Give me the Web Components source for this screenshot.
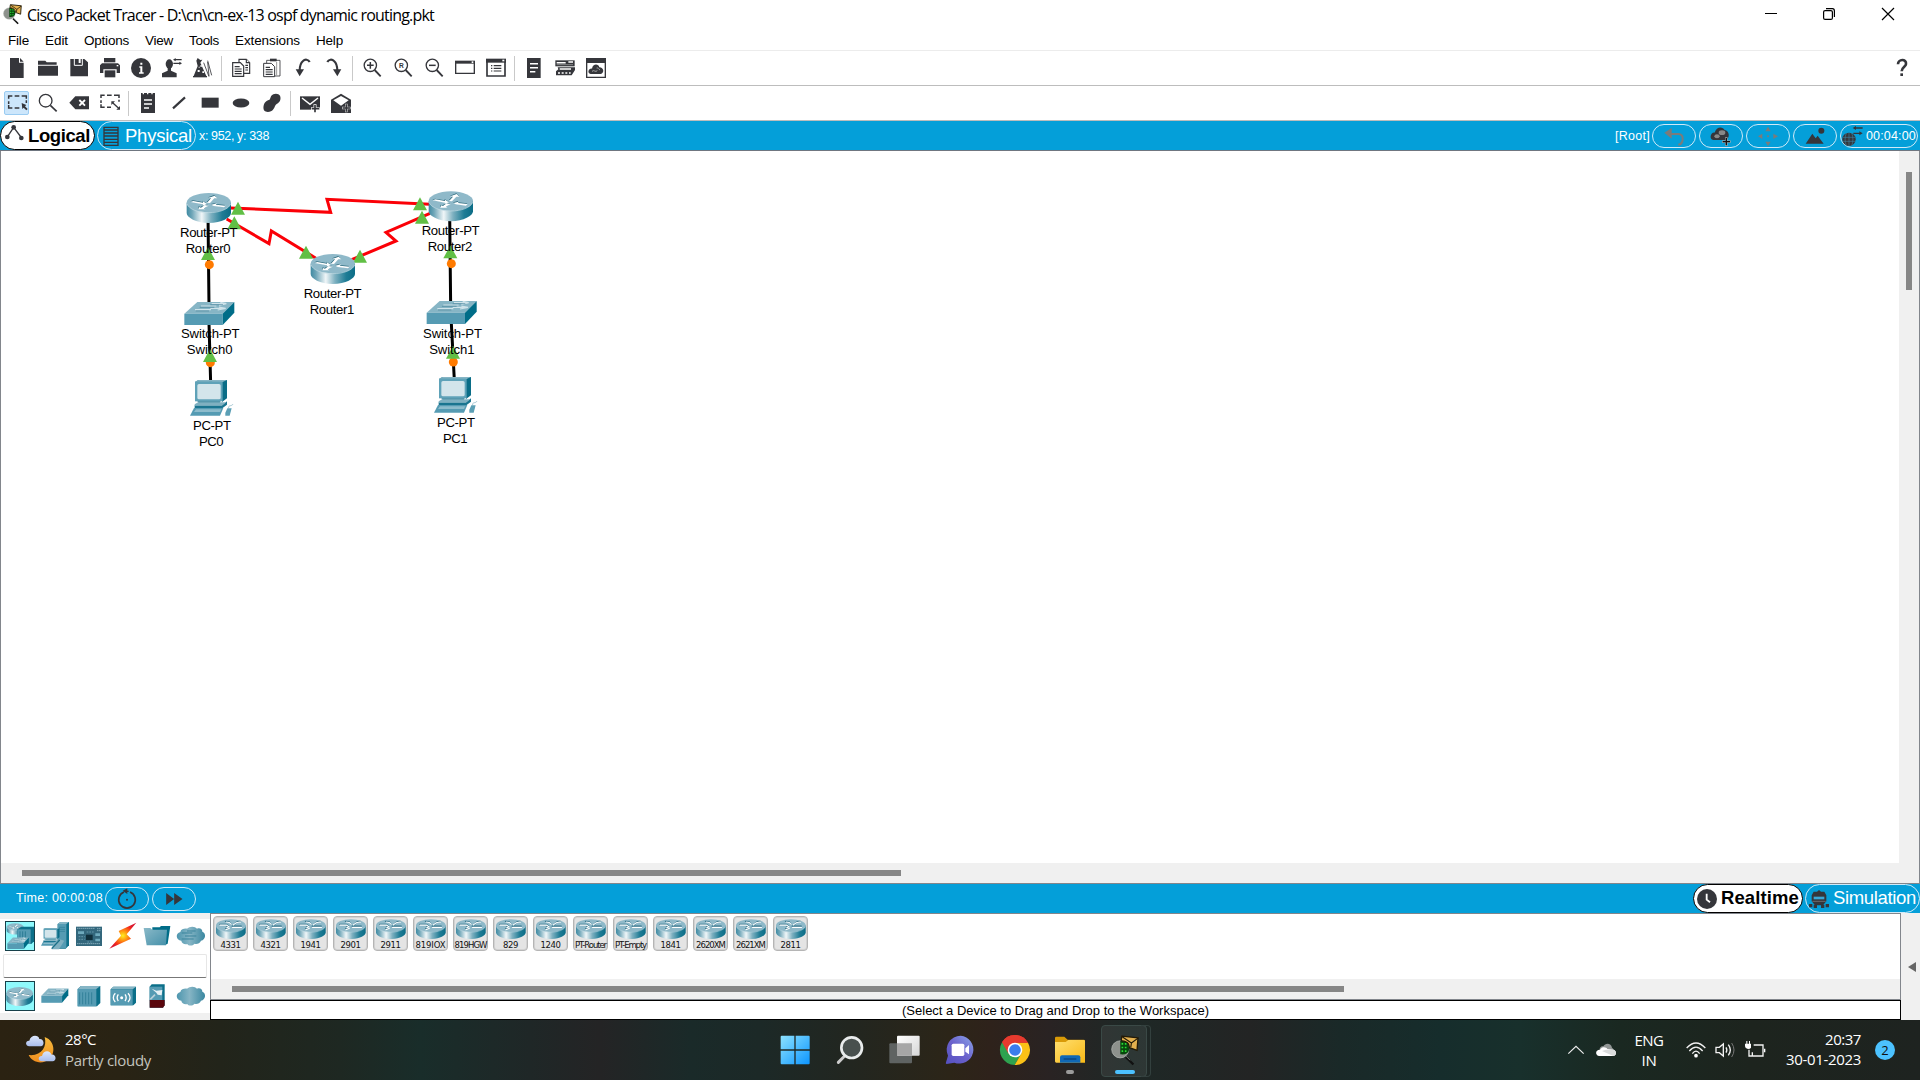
<!DOCTYPE html>
<html lang="en">
<head>
<meta charset="utf-8">
<title>Cisco Packet Tracer</title>
<style>
html,body{margin:0;padding:0;width:1920px;height:1080px;overflow:hidden;background:#fff}
body{display:flex;flex-direction:column;font-family:"Liberation Sans",Arial,sans-serif;font-size:13px;color:#000}
</style>
</head>
<body>
<pt-titlebar></pt-titlebar>
<pt-menubar></pt-menubar>
<pt-toolbar items="new open save print info user wizard | copy paste undo redo | zoomin zoomreset zoomout window list | notes devices cluster" help></pt-toolbar>
<pt-toolbar items="*select inspect delete resize | note line rect ellipse freeform | mail openmail"></pt-toolbar>
<pt-topbar></pt-topbar>
<net-workspace></net-workspace>
<pt-timebar></pt-timebar>
<pt-devicedock></pt-devicedock>
<win-taskbar></win-taskbar>
<script>
const K = '#35363b';
const grad = `<defs>
<linearGradient id="side"><stop offset="0" stop-color="#3f8aa2"/><stop offset=".12" stop-color="#6fa6b8"/><stop offset=".34" stop-color="#f0f6f8"/><stop offset=".55" stop-color="#7db0c0"/><stop offset=".8" stop-color="#1f7c95"/><stop offset="1" stop-color="#0b6c86"/></linearGradient>
<linearGradient id="cl"><stop offset="0" stop-color="#4d96ae"/><stop offset=".45" stop-color="#86b5c5"/><stop offset="1" stop-color="#3a87a0"/></linearGradient>
<linearGradient id="fo" x2="1" y2="1"><stop offset="0" stop-color="#8ab9c8"/><stop offset="1" stop-color="#4590a9"/></linearGradient>
</defs>`;
const routerArrows = `<path d="M12 28 48 35 48 39 61 34 49 26 49 30 20 25zM81 40 112 44 117 39 88 36 90 32 74 36zM61 30 73 17 65 16 84 9 92 17 83 17 70 31zM66 39 56 44 52 48 57 50 35 50 37 43 43 45 54 37z" fill="#0c5064" opacity=".75" transform="translate(-1 -2)"/>
<path d="M12 28 48 35 48 39 61 34 49 26 49 30 20 25zM81 40 112 44 117 39 88 36 90 32 74 36zM61 30 73 17 65 16 84 9 92 17 83 17 70 31zM66 39 56 44 52 48 57 50 35 50 37 43 43 45 54 37z" fill="#fff"/>`;
/* Flatter arrow set used on the palette buttons. */
const paletteArrows = `<g fill="none" stroke-linecap="round" stroke-linejoin="round"><g stroke="#2f7188" stroke-width="6" transform="translate(-1 -3)"><path d="M18 28H48L58 35 48 40M74 36H114M84 28C90 16 100 12 110 14M68 26 60 16 44 14M56 44 44 48"/></g><g stroke="#fff" stroke-width="5"><path d="M18 28H48L58 35 48 40M74 38H114M78 27C88 16 100 12 110 14M68 24 60 16 46 14M60 42 44 49"/></g></g>`;
const router = (x, y, s = 1, t = s, a = routerArrows) => `<g transform="translate(${x} ${y}) scale(${s} ${t})"><path d="M0 30V61C0 74 28 91 66.500 91S133 74 133 61V30z" fill="url(#side)"/><ellipse cx="66.500" cy="30" rx="66.500" ry="29" fill="#8fb9c9"/><path d="M1 34C8 50 34 60 66 60S126 50 132 34" fill="none" stroke="#c2dbe4" stroke-width="2"/>${a}</g>`;
const sw = (x, y, s = 1, t = s) => `<g transform="translate(${x} ${y}) scale(${s} ${t})"><path d="M0 36 39 1H150L115 36z" fill="#86b5c5"/><path d="M0 36H115V70H0z" fill="#559bb3"/><path d="M115 36 150 1V33L115 70z" fill="#006d88"/><path d="M82 6h42M108 2l18 4-22 5M50 13H96M78 20h44M104 16l20 4-24 5M32 24h48" stroke="#cfe3ea" stroke-width="3.500" fill="none"/><path d="M78 9h38M46 17h44M34 28h40" stroke="#48839a" stroke-width="2"/></g>`;
const pc = (x, y, s = 1, t = s) => `<g transform="translate(${x} ${y}) scale(${s} ${t})"><path d="M15 5 26 0H111V55L96 66V5z" fill="#0a6d87"/><path d="M15 5 26 0H111L98 6z" fill="#86b5c5"/><path d="M15 5H98V64H15z" fill="#5fa2b8"/><rect x="22" y="12" width="70" height="46" rx="5" fill="#d3e5eb"/><path d="M22 64H92L86 74H30z" fill="#2f7f98"/><path d="M14 76H96L111 64V74L98 84H14z" fill="#1a7590"/><path d="M14 73 24 67H108L96 77H14z" fill="#7fb0c1"/><path d="M12 84H100L90 107H0z" fill="#559bb3"/><path d="M18 88H94L90 96H12z" fill="#8dbccc"/><path d="M106 98 112 85 125 85 119 107H106z" fill="#5b9fb5"/><path d="M116 84C114 74 126 80 129 72" fill="none" stroke="#a9c8d3" stroke-width="3"/></g>`;
const lens = `<circle cx="25" cy="22" r="18.500" fill="none" stroke="${K}" stroke-width="4"/><path d="M38 36 56 55" stroke="${K}" stroke-width="5.500"/>`;
const cloudShape = 'M13 43C-4 42-5 20 10 17C12 8 22 6 30 7C38-1 54-1 60 7C70 4 76 9 76 16C88 20 87 40 72 43C68 53 58 54 53 52C46 60 34 59 31 53C22 55 14 51 13 43z';
/* name: [width px, height px, viewBox, markup] */
const I = {
 'new':`<path d="M9 0H36V14H50V60H9z"/><path d="M39 0 50 11H39z"/>`,
 open:`<path d="M0 8H22L26 13H56V20H0zM0 23H60V53H0z"/>`,
 save:`<path d="M4 3H46L57 13V55H4z"/><path d="M16 2V22H40V2" fill="none" stroke="#fff" stroke-width="3"/><path d="M29 3h6v12h-6z" fill="#fff"/>`,
 print:`<path d="M12 0H46V13H12z"/><path d="M6 16H54L60 22V45H50V34H10V45H0V22z"/><path d="M14 37H46V58H14z"/><path d="M50 21h5v4h-5z" fill="#fff"/>`,
 info:`<circle cx="30" cy="30" r="30"/><path d="M28 14h6v6h-6zM25 25h9v18h4v4H24v-4h4V29h-3z" fill="#fff"/>`,
 user:`<ellipse cx="22" cy="18" rx="11" ry="14"/><path d="M17 28H27V38L44 46V58H0V46L17 38z"/><path d="M38 5H59M34 16H55" stroke="${K}" stroke-width="3.500"/><path d="M33 5 41 0V10zM60 16 52 11V21z"/>`,
 wizard:`<path d="M14 0 22 6 28 5 22 14 40 54H2L14 24 10 8z"/><path d="M0 54h42v4H0z"/><path d="M22 22h5v4h-5zM14 36h6v6h-6zM28 40h5v5h-5zM17 26h3v3h-3z" fill="#fff"/><path d="M32 14 48 56M44 8 56 52M48 54 44 12" stroke="${K}" stroke-width="2.500"/>`,
 copy:`<g fill="#fff" stroke="${K}" stroke-width="3.500"><path d="M24 4H46L56 14V46H24z"/><path d="M46 4V14H56"/><path d="M5 14H28L38 24V55H5z"/></g><path d="M11 26H26M11 33H32M11 40H32M11 47H32M43 22H51M43 29H51M43 36H51" stroke="${K}" stroke-width="3.500"/>`,
 paste:`<g fill="#fff" stroke="${K}" stroke-width="2.500"><path d="M14 7H54V54H14z"/></g><path d="M24 2H44V10H24z"/><g fill="#fff" stroke="${K}" stroke-width="3"><path d="M5 16H28L38 26V56H5z"/></g><path d="M11 28H24M11 35H32M11 42H32M11 49H32" stroke="${K}" stroke-width="3.500"/><path d="M44 12V52" stroke="#999" stroke-width="3"/>`,
 undo:`<path d="M50 12C46 4 36 3 30 9C22 16 20 26 20 38" fill="none" stroke="${K}" stroke-width="6.500"/><path d="M8 34H33L20 55z"/>`,
 redo:`<path d="M10 12C14 4 24 3 30 9C38 16 40 26 40 38" fill="none" stroke="${K}" stroke-width="6.500"/><path d="M27 34H52L40 55z"/>`,
 zoomin:lens+`<path d="M15 22H35M25 12V32" stroke="${K}" stroke-width="4.500"/>`,
 zoomreset:lens+`<text x="25" y="29.500" font-size="20" font-weight="bold" text-anchor="middle" font-family="Liberation Sans">R</text>`,
 zoomout:lens+`<path d="M15 22H35" stroke="${K}" stroke-width="4.500"/>`,
 window:`<path d="M2 11H58V46H2z" fill="none" stroke="${K}" stroke-width="4"/><path d="M0 8H60V17H0z"/><path d="M50 10h5v5h-5z" fill="#fff"/>`,
 list:`<path d="M3 6H57V54H3z" fill="#fff" stroke="${K}" stroke-width="5"/><path d="M0 2H60V14H0z"/><path d="M49 5h6v5h-6z" fill="#fff"/><path d="M15 23h4M15 31h4M15 39h4M23 23H46M23 31H46M23 39H46" stroke="${K}" stroke-width="3.500"/>`,
 notes:`<path d="M9 0H50V60H9z"/><path d="M18 17H42M18 29H42M18 41H34" stroke="#fff" stroke-width="4.500"/>`,
 devices:`<path d="M1 7H59V25H1z"/><path d="M5 14H32M40 12H54" stroke="#fff" stroke-width="4.500"/><path d="M5 20H54" stroke="#aaa" stroke-width="2"/><path d="M8 28H60V36L50 52H3V40L10 34z"/><path d="M9 45h6M20 45h6M31 45h6M42 45h5M14 33H48" stroke="#fff" stroke-width="4"/>`,
 cluster:`<path d="M2 2H58V58H2z" fill="#fff" stroke="${K}" stroke-width="4"/><path d="M0 0H60V15H0z"/><path d="M14 48C2 46 8 30 18 32C20 16 38 16 40 28C54 28 56 46 44 48z"/><path d="M18 40C24 34 28 44 34 38M32 30C36 28 38 34 42 36" fill="none" stroke="#aaa" stroke-width="3"/>`,
 select:`<path d="M5 17V9H16M23 9H37M44 9H58V17M5 25V33M5 36V45H16M23 45H37M58 22V30" fill="none" stroke="${K}" stroke-width="4.500"/><path d="M44 30 58 36 54 40 62 48 58 52 50 44 46 48z"/>`,
 resize:`<path d="M3 15V7H14M21 7H35M42 7H57V15M3 22V30M3 34V43H14M21 43H33M57 20V26" fill="none" stroke="${K}" stroke-width="4.500"/><path d="M34 25H45L34 36zM60 50H49L60 39z"/><path d="M38 29 56 46" stroke="${K}" stroke-width="4"/>`,
 inspect:`<circle cx="23" cy="23" r="19" fill="none" stroke="${K}" stroke-width="4"/><path d="M37 37 56 55" stroke="${K}" stroke-width="5"/>`,
 'delete':`<path d="M1 29 19 10H60V49H19z"/><path d="M31 21 48 38M48 21 31 38" stroke="#fff" stroke-width="5.500"/>`,
 note:`<path d="M9 0H51V60H9z"/><path d="M14-1v5h4v-5zM27-1v5h4v-5zM40-1v5h4v-5z" fill="#fff"/><path d="M18 21H42M18 33H42M18 45H33" stroke="#fff" stroke-width="4.500"/>`,
 line:`<path d="M12 46 48 13" stroke="${K}" stroke-width="6.500"/>`,
 rect:`<path d="M5 14H56V44H5z"/>`,
 ellipse:`<ellipse cx="30" cy="30" rx="25" ry="13.500"/>`,
 freeform:`<path d="M28 8C34 0 50 0 54 8C58 17 54 28 45 32C39 35 39 42 34 49C28 58 12 60 6 52C2 42 6 26 18 22C26 20 24 14 28 8z"/>`,
 mail:`<path d="M0 10H60V50H0z"/><path d="M6 15 30 34 54 15" fill="none" stroke="#fff" stroke-width="4.500"/><path d="M45 34V60M33 47H59" stroke="#fff" stroke-width="9"/><path d="M45 36V58M35 47H57" stroke="${K}" stroke-width="5"/>`,
 openmail:`<path d="M0 20 30 2 60 20V60H0z"/><path d="M7 22 30 9 53 22 30 38z" fill="#fff"/><path d="M46 32V58M33 45H59" stroke="#ccc" stroke-width="8"/><path d="M46 34V56M35 45H57" stroke="${K}" stroke-width="4.500"/>`,
 help:`<path d="M18 19C18 2 44 2 42 18C42 26 29 27 29 40" fill="none" stroke="${K}" stroke-width="8"/><path d="M25 46h8v8h-8z"/>`,
 nodes:[20,18,'0 0 60 54',`<path d="M6 40 26 10 50 42" fill="none" stroke="${K}" stroke-width="4"/><circle cx="7" cy="39" r="7"/><circle cx="26" cy="10" r="7"/><circle cx="49" cy="42" r="7"/>`],
 rack:[16,20,'0 0 48 60',`<path d="M3 4H45V58H3z" fill="none" stroke="${K}" stroke-width="4"/><path d="M3 12H45M3 21H45M3 30H45M3 40H45M3 49H45" stroke="${K}" stroke-width="4"/>`],
 back:[22,20,'0 0 66 60',`<path d="M4 20 26 6V38z" fill="#7b7b7b"/><path d="M22 24H48C64 26 62 54 46 56" fill="none" stroke="#7b7b7b" stroke-width="6"/>`],
 newcluster:[22,20,'0 0 66 60',`<path d="M10 42C-4 40 2 18 14 20C18 2 38 0 44 12C58 14 62 36 46 42z"/><ellipse cx="21" cy="31" rx="8" ry="6" fill="#888"/><ellipse cx="36" cy="20" rx="10" ry="7" fill="#888"/><path d="M49 34V60M36 47H62" stroke="#aaa" stroke-width="7"/><path d="M49 36V58M38 47H60" stroke="#111" stroke-width="4"/>`],
 move:[20,20,'0 0 60 60',`<g fill="#7b7b7b"><path d="M30 2 38 16H22zM30 60 22 47H38zM0 31 13 23V39zM60 31 46 23V39z"/><circle cx="30" cy="31" r="3"/></g>`],
 bgimg:[20,17,'0 0 60 51',`<path d="M2 50 22 20 32 34 38 26 56 50z"/><circle cx="49" cy="11" r="9"/>`],
 env:[22,20,'0 0 66 60',`<circle cx="21" cy="40" r="20"/><path d="M2 34H40M2 46H40M21 20V60M13 21C8 34 8 46 13 59M29 21C34 34 34 46 29 59" fill="none" stroke="#3f7f9c" stroke-width="2"/><path d="M38 6H62M34 22H54" stroke="${K}" stroke-width="4"/><path d="M32 6 42 0V12zM62 22 52 16V28z"/>`],
 cycle:[22,22,'0 0 66 66',`<path d="M24 12A25 25 0 1 0 42 12" fill="none" stroke="${K}" stroke-width="5"/><path d="M20 8 34 1V18z"/><path d="M28 8H38V12H28z"/><circle cx="33" cy="35" r="3"/>`],
 ffwd:[17,12,'0 0 50 36',`<path d="M0 0 24 18 0 36zM24 0 49 18 24 36z"/>`],
 clock:[20,20,'0 0 60 60',`<circle cx="30" cy="30" r="30"/><path d="M29 14V32L39 40" fill="none" stroke="#fff" stroke-width="5.500"/>`],
 sim:[20,18,'0 0 60 54',`<path d="M30 0 36 5H46L52 16V34L42 46H18L8 34V16L14 5H24z"/><path d="M14 20H46V28H14z" fill="#3aa7d6"/><path d="M10 34H50" stroke="#888" stroke-width="2"/><path d="M0 42H10V52H0zM14 44H24V54H14zM36 44H46V54H36zM50 42H60V52H50z"/>`],
 min:[12,12,'0 0 12 12',`<path d="M0 5.500H12" stroke="#000"/>`],
 restore:[12,12,'0 0 12 12',`<g fill="none" stroke="#000" stroke-width="1.200"><rect x=".6" y="2.600" width="8.800" height="8.800" rx="1.500"/><path d="M3 .6H9.500Q11.400.6 11.400 3V9"/></g>`],
 close:[12,12,'0 0 12 12',`<path d="M0 0 12 12M12 0 0 12" stroke="#000" stroke-width="1.200"/>`],
 app:[28,30,'0 0 85 90',`<circle cx="28" cy="43" r="26" fill="#8d918c" stroke="#b9bdb8" stroke-width="2"/><path d="M28 18C46 14 56 28 55 44C53 54 44 60 28 58z" fill="#07480c"/><path d="M32 24h5v5h-5zM42 24h5v5h-5zM32 35h5v5h-5zM42 35h5v5h-5zM32 46h5v5h-5zM42 46h5v5h-5z" fill="#2bdc35"/><path d="M33 3 82 8 79 46 56 38C56 26 48 18 31 17z" fill="#e3b04e" stroke="#221a08" stroke-width="4"/><path d="M34 5 62 24 82 9M62 24 60 36" fill="none" stroke="#221a08" stroke-width="3.500"/><path d="M45 66 68 89" stroke="#111" stroke-width="7"/><path d="M45 63 58 76" stroke="#6b706b" stroke-width="3"/>`],
 c_net:[28,28,'0 0 84 84',router(2,3,.38,.38)+`<path d="M34 22 46 14H84V58L76 66H34z" fill="#0b6f89"/><path d="M34 22H74V66H34z" fill="#559bb3"/><path d="M42 28V60M50 28V60M58 28V60" stroke="#2c7c95" stroke-width="3"/>`+sw(4,46,.43,.5)],
 c_end:[28,28,'0 0 84 84',`<path d="M50 6 58 0H84V70L74 80H50z" fill="#0f718b"/><path d="M50 6 58 0H84L76 6z" fill="#86b5c5"/><path d="M50 6H76V78H50z" fill="#559bb3"/><path d="M54 16H72M54 22H72M54 28H72" stroke="#2c7c95" stroke-width="2"/>`+pc(0,18,.5,.5)+`<path d="M38 62 56 52 70 56 54 82H32z" fill="#7fb0c1"/><path d="M32 80 56 54" stroke="#1a6f88" stroke-width="4"/>`],
 c_comp:[26,20,'0 0 78 60',`<path d="M0 2H78V60H0z" fill="#33677c"/><path d="M4 7H56M4 53H72M64 8H74M64 14H74" stroke="#a9cad6" stroke-width="3" stroke-dasharray="3 3"/><path d="M30 26H50V42H30z" fill="#102f3b"/><path d="M6 16H24V24H6zM58 22H72V30H58zM58 38H72V46H58z" fill="#6faabd"/><path d="M8 32H26M8 40H26M32 18H54M34 48H52" stroke="#7fb0c1" stroke-width="2" stroke-dasharray="5 3"/>`],
 c_bolt:[28,28,'0 0 84 84',`<defs><radialGradient id="b"><stop offset="0" stop-color="#ffef20"/><stop offset=".35" stop-color="#ff9a10"/><stop offset=".8" stop-color="#f4281c"/><stop offset="1" stop-color="#d81830"/></radialGradient></defs><path d="M82 2 29 27 36 41 1 80 66 50 53 37z" fill="url(#b)"/>`],
 c_folder:[28,22,'0 0 84 66',`<path d="M28 7H50L54 3H82L74 56 66 60H28z" fill="#006d88"/><path d="M2 9H22L28 14H72L69 61H11z" fill="url(#fo)"/>`],
 c_cloud:[28,20,'0 0 84 58',`<path d="${cloudShape}" fill="url(#cl)"/><path d="M14 20H46M24 29H58M14 38H50M30 14H56" stroke="#3b849c" stroke-width="3"/>`],
 c_cloud2:[28,20,'0 0 84 58',`<path d="${cloudShape}" fill="url(#cl)"/>`],
 c_router:[28,22,'0 0 84 66',router(1,5,.6,.64)],
 c_switch:[28,18,'0 0 84 54',sw(1,4,.54,.62)],
 c_hub:[24,22,'0 0 72 66',`<path d="M2 12 12 3H70V54L60 64H2z" fill="#0b6f89"/><path d="M2 12 12 3H70L58 12z" fill="#86b5c5"/><path d="M2 12H58V64H2z" fill="#559bb3"/><path d="M8 22V58M17 22V58M26 22V58M35 22V58M44 22V58" stroke="#2c7c95" stroke-width="2.500"/>`],
 c_wifi:[26,20,'0 0 78 60',`<path d="M2 10 10 2H78V50L70 58H2z" fill="#0b6f89"/><path d="M2 10 10 2H78L68 10z" fill="#86b5c5"/><path d="M2 10H68V58H2z" fill="#559bb3"/><g fill="none" stroke="#fff" stroke-width="4"><path d="M25 25C20 32 20 38 25 45M16 22C8 30 8 40 16 48M45 25C50 32 50 38 45 45M54 22C62 30 62 40 54 48"/></g><circle cx="35" cy="35" r="4.500" fill="#fff"/>`],
 c_fw:[16,24,'0 0 48 72',`<path d="M2 8 8 1H47V62L42 71H2z" fill="#0b6f89"/><path d="M2 8H40V50H2z" fill="#559bb3"/><path d="M2 48H47V64L42 71H2z" fill="#5a060c"/><path d="M8 14 22 20 40 18 38 34 26 32 22 26z" fill="#e6f1f5"/><path d="M4 46 18 32" stroke="#b9d0d8" stroke-width="5"/>`],
 winlogo:[30,30,'0 0 90 90',`<defs><linearGradient id="w" x2="1" y2="1" gradientUnits="userSpaceOnUse" gradientTransform="scale(90)"><stop offset="0" stop-color="#90e4ff"/><stop offset="1" stop-color="#0a94ff"/></linearGradient></defs><path d="M2 5Q2 2 5 2H43V43H2zM47 2H86Q89 2 89 5V43H47zM2 47H43V88H5Q2 88 2 85zM47 47H89V85Q89 88 86 88H47z" fill="url(#w)"/>`],
 tsearch:[30,30,'0 0 90 90',`<path d="M10 82 26 66" stroke="#ccc" stroke-width="9" stroke-linecap="round"/><circle cx="50" cy="38" r="31" fill="#48504e" stroke="#e9ecec" stroke-width="8"/>`],
 taskview:[32,30,'0 0 96 90',`<defs><linearGradient id="t" x2="1" y2="1"><stop offset="0" stop-color="#fff"/><stop offset="1" stop-color="#d6d6d6"/></linearGradient></defs><rect x="1" y="25" width="68" height="60" rx="3" fill="#5f6362"/><rect x="24" y="2" width="68" height="60" rx="3" fill="url(#t)"/><path d="M24 25H69V62H27Q24 62 24 59z" fill="#a6a6a6"/>`],
 chat:[30,30,'0 0 90 90',`<defs><linearGradient id="h" x1="1" x2="0" y2="1"><stop offset="0" stop-color="#8aa6ea"/><stop offset=".5" stop-color="#6b62cc"/><stop offset="1" stop-color="#5450c0"/></linearGradient></defs><path d="M47 2A42 42 0 1 1 28 83L5 87Q1 87 3 82L9 62A42 42 0 0 1 47 2z" fill="url(#h)"/><rect x="20" y="26" width="38" height="37" rx="5" fill="#fff"/><path d="M61 40 72 30V58L61 50z" fill="#fff"/>`],
 chrome:[30,30,'0 0 90 90',`<path d="M6 22A45 45 0 0 1 84 23H45z" fill="#e63a2e"/><path d="M6 22A45 45 0 0 0 44 90L64 56 45 45z" fill="#2ea24f"/><path d="M84 23A45 45 0 0 1 44 90L66 52 60 30 45 23z" fill="#fbc116"/><path d="M6 22A45 45 0 0 1 84 23H45L30 40 26 57z" fill="#e63a2e"/><circle cx="45" cy="45" r="22" fill="#fff"/><circle cx="45" cy="45" r="17.500" fill="#3b7ded"/>`],
 explorer:[30,28,'0 0 90 84',`<defs><linearGradient id="e" x2="1" y2="1"><stop offset="0" stop-color="#ffdf70"/><stop offset="1" stop-color="#f9b916"/></linearGradient></defs><path d="M0 6Q0 2 4 2H28L38 11H86Q90 11 90 15V40H0z" fill="#d99a07"/><path d="M0 18H32L40 12H86Q90 12 90 16V80H4Q0 80 0 76z" fill="url(#e)"/><path d="M15 80V64Q15 58 21 58H70Q76 58 76 64V80z" fill="#1068b5"/><path d="M26 69H64" stroke="#08437e" stroke-width="4"/>`],
 weather:[30,28,'0 0 90 84',`<defs><linearGradient id="m" x2="0" y2="1"><stop offset="0" stop-color="#f6bb3e"/><stop offset="1" stop-color="#ef8d1e"/></linearGradient><linearGradient id="u" x2="0" y2="1"><stop offset="0" stop-color="#dce7fb"/><stop offset="1" stop-color="#a9bdec"/></linearGradient></defs><path d="M56 6C92 18 92 72 50 82C30 84 14 74 8 60C46 64 64 36 56 6z" fill="url(#m)"/><path d="M10 34C-4 32-2 16 10 17C14-2 38-1 40 12C54 10 58 32 44 34z" fill="url(#u)"/><path d="M48 79C34 78 36 62 48 63C52 44 74 46 76 59C90 56 94 78 80 79z" fill="url(#u)"/>`],
 chevron:[18,12,'0 0 54 36',`<path d="M4 29 27 7 50 29" fill="none" stroke="#eee" stroke-width="3.500"/>`],
 onedrive:[20,14,'0 0 60 42',`<path d="M12 24C8 12 18 8 22 10C28-2 46 0 48 14L58 24z" fill="#929796"/><path d="M10 39C-4 37-2 19 12 20C20 8 32 14 34 18L52 20C62 22 64 36 52 39z" fill="#fff"/><path d="M30 20 50 20C64 22 62 38 52 39L18 24z" fill="#dadcdc"/>`],
 wifi:[20,16,'0 0 60 48',`<g fill="none" stroke="#f2f2f2" stroke-width="4"><path d="M2 18Q30-12 58 18M10 27Q30 4 50 27M19 35Q30 20 41 35"/></g><circle cx="30" cy="41" r="5.500" fill="#fff"/>`],
 sound:[21,18,'0 0 63 54',`<path d="M3 19H13L25 9V45L13 35H3z" fill="none" stroke="#f2f2f2" stroke-width="4"/><path d="M33 19Q38 27 33 35M40 11Q52 27 40 43" fill="none" stroke="#f2f2f2" stroke-width="4"/><path d="M50 6Q64 27 50 48" fill="none" stroke="#777" stroke-width="3"/>`],
 battery:[21,18,'0 0 63 54',`<path d="M26 12H54V45H12V26M22 34V45" fill="none" stroke="#f2f2f2" stroke-width="4"/><path d="M0 8H18V20Q16 24 9 24Q0 22 0 16zM4 0H7V9H4zM12 0H15V9H12zM57 23H61V34H57z" fill="#fff"/>`]
};
function svgOf(n){
  const d = I[n];
  const [w,h,vb,m] = Array.isArray(d) ? d : [20,20,'0 0 60 60',d];
  return `<svg width="${w}" height="${h}" viewBox="${vb}" fill="${K}" overflow="visible">${n.startsWith('c_')?grad:''}${m}</svg>`;
}
function define(name, css, html){
  customElements.define(name, class extends HTMLElement{
    connectedCallback(){
      if(this.shadowRoot) return;
      const r = this.attachShadow({mode:'open'});
      r.innerHTML = `<style>:host{box-sizing:border-box}*{box-sizing:border-box}${css}</style>` + (typeof html==='function' ? html(this) : html);
    }
  });
}
/* Single-line label whose tracking is tuned so that it takes exactly `w` pixels. */
customElements.define('fit-text', class extends HTMLElement{
  connectedCallback(){
    if(this.shadowRoot) return;
    const r = this.attachShadow({mode:'open'});
    r.innerHTML = `<style>:host{display:block;flex:none;white-space:pre}span{display:inline-block}</style><span></span>`;
    const s = r.querySelector('span');
    s.textContent = this.getAttribute('t');
    const w = +this.getAttribute('w');
    const nat = s.getBoundingClientRect().width;
    if(w && nat){
      s.style.letterSpacing = ((w - nat) / s.textContent.length) + 'px';
      this.style.width = w + 'px';
    }
  }
});
define('pt-icon', `:host{display:block;flex:none}svg{display:block}`, e => svgOf(e.getAttribute('name')));

define('pt-titlebar', `:host{display:flex;height:30px;flex:none;align-items:center;padding-left:3px;font:16px "Open Sans","Noto Sans",sans-serif}
.ico{width:24px;height:22px}.ico svg{width:19px;height:20px;display:block}.sp{flex:1}.c{width:58.500px;height:28px;display:flex;justify-content:center;align-items:center;margin-bottom:2px}.last{margin-right:3px}fit-text{margin-top:-1px}`,
 `<div class="ico">${svgOf('app')}</div><fit-text t="Cisco Packet Tracer - D:\\cn\\cn-ex-13 ospf dynamic routing.pkt" w="407"></fit-text><div class="sp"></div>
 <div class="c"><pt-icon name="min"></pt-icon></div><div class="c"><pt-icon name="restore"></pt-icon></div><div class="c last"><pt-icon name="close"></pt-icon></div>`);

define('pt-menubar', `:host{display:flex;height:21px;flex:none;border-bottom:1px solid #ececec;align-items:center;padding:0 0 0 8px;gap:16px;font-size:13.500px}`,
 `<fit-text t="File" w="21"></fit-text><fit-text t="Edit" w="23"></fit-text><fit-text t="Options" w="45"></fit-text><fit-text t="View" w="28"></fit-text><fit-text t="Tools" w="30"></fit-text><fit-text t="Extensions" w="65"></fit-text><fit-text t="Help" w="27"></fit-text>`);

define('pt-toolbar', `:host{display:flex;height:35px;flex:none;border-bottom:1px solid #bdbdbd;align-items:center;padding-left:1px}
.s{width:31px;height:24px;display:flex;align-items:center;justify-content:center}.on{width:25px;margin:0 3px;background:#cce6fb;border:1px solid #9bccf2;border-radius:2px}
.sep{width:7px;height:25px;display:flex;justify-content:center}.sep i{width:1px;background:#c9c9c9}.sp{flex:1}.h{margin-right:3px}`,
 e => e.getAttribute('items').split(' ').map(n => n==='|' ? '<div class="sep"><i></i></div>' :
   `<div class="s ${n[0]==='*'?'on':''}"><pt-icon name="${n.replace('*','')}"></pt-icon></div>`).join('') +
   (e.hasAttribute('help') ? '<div class="sp"></div><div class="s h"><pt-icon name="help"></pt-icon></div>' : ''));

/* Rounded tab: solid white when active, outlined otherwise. */
define('pt-tab', `:host{display:flex;flex:none;align-items:center;height:29px;border-radius:14.500px;border:1px solid #cfeaf8;color:#fff;font-size:18.500px;overflow:visible}
:host([active]){background:#fff;border-color:#000;color:#000;font-weight:bold}`, `<slot></slot>`);
define('pt-pill', `:host{display:flex;flex:none;align-items:center;justify-content:center;width:44px;height:24px;border-radius:12px;border:1px solid #cfeaf8;color:#fff}`, `<slot></slot>`);

define('pt-topbar', `:host{display:flex;height:30px;flex:none;background:#049fd9;border-bottom:1px solid #6f7680;align-items:center;color:#fff;font-size:12.500px}
.sp{flex:1}.r{display:flex;gap:3px;margin:0 2px 0 2px}.n{margin:-6px 4px 0 4px}.xy{margin-left:3px}`,
 `<pt-tab active style="width:95px"><pt-icon class="n" name="nodes"></pt-icon><fit-text t="Logical" w="62" style="margin-left:-1px"></fit-text></pt-tab>
 <pt-tab style="width:99px;margin-left:2px"><pt-icon name="rack" style="margin:0 6px 0 5px"></pt-icon><fit-text t="Physical" w="67"></fit-text></pt-tab>
 <fit-text class="xy" t="x: 952, y: 338" w="70"></fit-text><div class="sp"></div><fit-text t="[Root]" w="35"></fit-text>
 <div class="r"><pt-pill><pt-icon name="back"></pt-icon></pt-pill><pt-pill><pt-icon name="newcluster"></pt-icon></pt-pill><pt-pill><pt-icon name="move"></pt-icon></pt-pill><pt-pill><pt-icon name="bgimg"></pt-icon></pt-pill><pt-pill style="width:78px"><pt-icon name="env"></pt-icon><fit-text t="00:04:00" w="50" style="margin:0 0 0 2px"></fit-text></pt-pill></div>`);

const tri = (x,y) => `<path d="M${x} ${y-20}L${x+21} ${y+19}H${x-21}z" fill="#61bf45"/>`;
const dot = (x,y) => `<circle cx="${x}" cy="${y}" r="13.500" fill="#ff7a00"/>`;
const lab = (x,y,a,wa,b,wb) => `<text x="${x-1}" y="${y}" textLength="${wa}">${a}</text><text x="${x+(wa-wb)/2-3}" y="${y+48}" textLength="${wb}">${b}</text>`;
define('net-workspace', `:host{display:grid;grid-template:712px 20px / 1fr 20px;height:733px;flex:none;border:1px solid #82868c;border-width:0 1px 1px 1px;background:#fff}
svg{display:block}.v,.h{background:#f0f0f0}.v{padding:21px 0 0 7px}.v i{display:block;width:6px;height:118px;background:#868686}.h{grid-column:1/3;padding:7px 0 0 21px}.h i{display:block;width:879px;height:6px;background:#868686}`,
 `<svg width="1898" height="712" viewBox="1 0 1898 712">${grad}<g transform="translate(160 29) scale(.333333)" font-family="Liberation Sans" font-size="39.500">
 <g fill="none" stroke="#fb0007" stroke-width="9"><path d="M210 84 512 97 501 58 810 73"/><path d="M200 117 327 191 334 153 470 236"/><path d="M575 239 708 183 678 157 810 100"/></g>
 <g stroke="#000" stroke-width="9"><path d="M144 100 147 380M147 430 152 610M869 100 872 380M874 430 883 600"/></g>
 ${tri(234,85)+tri(223,129)+tri(438,217)+tri(600,229)+tri(780,72)+tri(786,112)+dot(148,254)+tri(144,221)+dot(151,548)+tri(150,527)+dot(874,251)+tri(871,216)+dot(880,546)+tri(879,517)}
 ${router(80,38)+router(806,33)+router(452,221)+sw(73,365)+sw(800,362)+pc(90,600)+pc(822,591)}
 ${lab(61,170,'Router-PT',173,'Router0',135)+lab(786,165,'Router-PT',174,'Router2',134)+lab(432,353,'Router-PT',174,'Router1',134)+lab(64,475,'Switch-PT',176,'Switch0',137)+lab(790,473,'Switch-PT',177,'Switch1',136)+lab(100,749,'PC-PT',114,'PC0',74)+lab(832,740,'PC-PT',114,'PC1',74)}
 </g></svg><div class="v"><i></i></div><div class="h"><i></i></div>`);

define('pt-timebar', `:host{display:flex;height:29px;flex:none;background:#049fd9;align-items:center;color:#fff;font-size:12.500px;padding-left:16px}.sp{flex:1}fit-text{margin-top:-1px}`,
 `<fit-text t="Time: 00:00:08" w="87"></fit-text><pt-pill style="margin-left:2px"><pt-icon name="cycle"></pt-icon></pt-pill><pt-pill style="margin-left:3px"><pt-icon name="ffwd"></pt-icon></pt-pill><div class="sp"></div>
 <pt-tab active style="width:110px"><pt-icon name="clock" style="margin:0 4px 0 3px"></pt-icon><fit-text t="Realtime" w="78"></fit-text></pt-tab>
 <pt-tab style="width:115px;margin-left:2px"><pt-icon name="sim" style="margin:0 4px 0 3px"></pt-icon><fit-text t="Simulation" w="83"></fit-text></pt-tab>`);

define('pt-model', `:host{display:flex;flex:none;flex-direction:column;align-items:center;width:35px;height:35px;border:1px solid #b5b5b5;border-radius:4px;background:#e4e4e4;padding-top:2px;font:8.500px/9px "DejaVu Sans",sans-serif;color:#111;box-shadow:inset 0 0 0 1px #d2d2d2}svg{display:block;flex:none;margin-bottom:2px}`,
 e => `<svg width="30" height="20" viewBox="0 0 90 60">${grad}${router(0,0,.67,.66,paletteArrows)}</svg><fit-text t="${e.getAttribute('name')}" w="${e.getAttribute('w')}"></fit-text>`);

const models = [['4331',20],['4321',20],['1941',20],['2901',20],['2911',20],['819IOX',30],['819HGW',32],['829',15],['1240',20],['PT-Router',31],['PT-Empty',31],['1841',20],['2620XM',29],['2621XM',29],['2811',20]];
const cat = names => `<div class="row">` + names.map((n,i) => `<div class="${i?'i':'i on'}"><pt-icon name="c_${n}"></pt-icon></div>`).join('') + '</div>';
define('pt-devicedock', `:host{display:flex;height:107px;flex:none;background:#f0f0f0}
.left{width:210px;padding-top:6px;flex:none}.box{background:#fff;height:94px;padding-top:2px}
.row{display:flex;height:30px;padding-left:5px}.i{width:34.200px;height:30px;display:flex;align-items:center;justify-content:center;flex:none}.on{width:30px;background:#8ff9fc;border:1px solid #17404a;margin-right:2.500px}
.in{height:24px;margin:3px;border:1px solid #e6e6e6;border-bottom:1px solid #777;border-radius:2px;background:#fff}
.main{width:1691px;display:flex;flex-direction:column}.list{height:66px;background:#fff;border:1px solid #82868c;border-width:1px 1px 0 1px;display:flex;gap:5px;padding:2px}
.sb{height:21px;border:1px solid #82868c;border-top:0;padding:7px 0 0 21px}.sb i{display:block;width:1112px;height:6px;background:#868686}
.msg{height:20px;background:#fff;border:1px solid #000;display:flex;align-items:center;justify-content:center;font-size:13px}.side{flex:1;display:flex;align-items:center;padding:0 0 0 7px}`,
 `<div class="left"><div class="box">${cat(['net','end','comp','bolt','folder','cloud'])}<div class="in"></div>${cat(['router','switch','hub','wifi','fw','cloud2'])}</div></div>
 <div class="main"><div class="list">${models.map(m=>`<pt-model name="${m[0]}" w="${m[1]}"></pt-model>`).join('')}</div><div class="sb"><i></i></div><div class="msg"><fit-text t="(Select a Device to Drag and Drop to the Workspace)" w="307"></fit-text></div></div>
 <div class="side"><svg width="8" height="10"><path d="M0 5 8 0V10z" fill="#666"/></svg></div>`);

define('win-taskbar', `:host{display:flex;height:60px;flex:none;color:#fff;font:15px/21px "Open Sans","Noto Sans",sans-serif;background:linear-gradient(90deg,#2b2212 0,#292314 120px,#22241a 220px,#1e2822 340px,#192d2a 420px,#1f2727 530px,#242425 600px,#1a2a29 690px,#1c2927 760px,#222620 850px,#2c2518 950px,#2e221b 990px,#292323 1050px,#1e2826 1130px,#232424 1250px,#1a2928 1340px,#162d2c 1440px,#18302c 1520px,#1a2821 1620px,#1d241e 1750px,#1e2320 1920px)}
.w{width:767px;display:flex;padding-left:26px;align-items:center}.w pt-icon{margin:-2px 9px 0 0}.w .p{color:#c4c3bd}
.apps{display:flex;width:400px;flex:none}.a{width:55px;display:flex;align-items:center;justify-content:center;position:relative;flex:none}
.a b{position:absolute;bottom:6px;height:4px;border-radius:2px;background:#9b9b9b;width:8px}.act:before{content:"";position:absolute;left:4px;top:5px;width:44px;height:50px;border-radius:4px;border:1px solid #3a4946;background:#ffffff12}
.act:after{content:"";position:absolute;left:44px;top:5px;width:9px;height:50px;border-radius:0 4px 4px 0;border:1px solid #33403e;border-left:0}.act b{width:20px;background:#4cc2ff}.act pt-icon{position:relative}
.tray{flex:1;display:flex;align-items:center;padding-left:400px}.lang{display:flex;flex-direction:column;align-items:center;width:30px;margin:0 22px 0 18px;line-height:20px}.clk{display:flex;flex-direction:column;align-items:flex-end;line-height:20px;margin:-2px 0 0 20px}
.n{width:20px;height:20px;border-radius:10px;background:#4cc2ff;color:#111;font-size:13px;display:flex;align-items:center;justify-content:center;margin-left:14px}`,
 `<div class="w"><pt-icon name="weather"></pt-icon><div><fit-text t="28°C" w="31"></fit-text><fit-text class="p" t="Partly cloudy" w="86"></fit-text></div></div>
 <div class="apps">${['winlogo','tsearch','taskview','chat','chrome','explorer','app'].map((n,i)=>`<div class="a ${i===6?'act':''}"><pt-icon name="${n}"></pt-icon>${i>4?'<b></b>':''}</div>`).join('')}</div>
 <div class="tray"><pt-icon name="chevron"></pt-icon><pt-icon name="onedrive" style="margin-left:11px"></pt-icon><div class="lang"><fit-text t="ENG" w="29"></fit-text><fit-text t="IN" w="15"></fit-text></div>
 <pt-icon name="wifi"></pt-icon><pt-icon name="sound" style="margin-left:9px"></pt-icon><pt-icon name="battery" style="margin-left:9px"></pt-icon>
 <div class="clk"><fit-text t="20:37" w="36"></fit-text><fit-text t="30-01-2023" w="75"></fit-text></div><div class="n">2</div></div>`);
</script>
</body>
</html>
